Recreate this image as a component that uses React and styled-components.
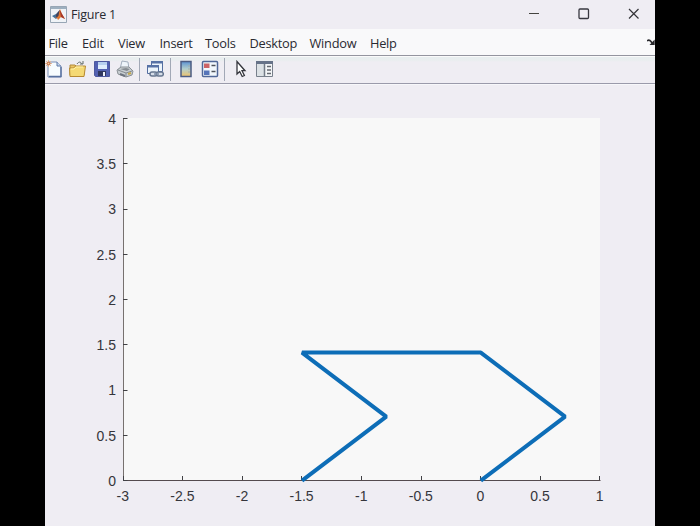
import React from "react";
import styled, { createGlobalStyle } from "styled-components";

const GlobalStyle = createGlobalStyle`
  * { box-sizing: border-box; }
  body { margin: 0; background: #000; overflow: hidden; }
`;

const Screen = styled.main`
  display: flex;
  justify-content: center;
  width: 700px;
  height: 526px;
  background: #000;
`;

const FigureWindow = styled.section`
  display: flex;
  flex-direction: column;
  width: 610px;
  height: 526px;
  overflow: hidden;
  background: #efedf3;
  color: #292a31;
  font-family: "Open Sans", "Noto Sans", sans-serif;
`;

const TitleBar = styled.header`
  display: flex;
  align-items: center;
  height: 29px;
  flex: none;
  padding: 0 12px 1px 5px;
  background: #efedf3;
`;

const Title = styled.h1`
  margin: 0 auto 0 4px;
  padding-top: 1px;
  font-size: 12.5px;
  letter-spacing: -0.2px;
  line-height: 18px;
  font-weight: 400;
`;

const WindowControls = styled.div`
  display: flex;
  gap: 32px;
`;

const ControlButton = styled.button`
  display: grid;
  place-items: center;
  width: 18px;
  height: 18px;
  padding: 0;
  border: 0;
  background: transparent;
`;

const MenuBar = styled.nav`
  display: flex;
  align-items: center;
  height: 27px;
  flex: none;
  padding: 2px 0 0 3.5px;
  background: #f9f9fa;
  border-bottom: 1px solid #94959f;
`;

const MenuItem = styled.span`
  width: ${({ $width }) => $width}px;
  font-size: 12.8px;
  line-height: 18px;
  letter-spacing: -0.25px;
  white-space: nowrap;
`;

const DockIcon = styled.svg`
  margin-left: auto;
  flex: none;
`;

const ToolBar = styled.div`
  display: flex;
  align-items: center;
  height: 28px;
  flex: none;
  padding-bottom: 1px;
  background: linear-gradient(#fafafa 1px, #e8eeef 1px, #e9eeef 4px, #efedf3 6px);
  border-bottom: 1px solid #9a9aaa;
`;

const Tool = styled.span`
  display: flex;
  width: 18px;
  height: 18px;
  flex: none;
  margin: 0 ${({ $after }) => $after || 0}px 0 ${({ $before }) => $before || 0}px;
`;

const Separator = styled.i`
  width: 1px;
  height: 23px;
  flex: none;
  background: #a2a8b6;
`;

const PlotPanel = styled.div`
  flex: 1;
  border-top: 1px solid #f7f7fa;
`;

const Chart = styled.svg`
  display: block;
  font-family: "Liberation Sans", Arial, sans-serif;
  font-size: 14px;
  fill: #35353b;
`;

const menus = [
  ["File", 33.5], ["Edit", 36], ["View", 41.5], ["Insert", 45.5],
  ["Tools", 44.5], ["Desktop", 60], ["Window", 60.5], ["Help", 40],
];

const Icon = ({ children, width = 18 }) => (
  <svg width={width} height="18" viewBox={`0 0 ${width} 18`} fill="none">{children}</svg>
);

const MatlabIcon = () => (
  <svg width="17" height="17" viewBox="0 0 17 17">
    <path d="M.5 .5h16v16H.5z" fill="#f0f3f7" stroke="#98a6b5" />
    <path d="M1 1h15v2H1z" fill="#9eafbf" />
    <path d="M2 10l4-2 4-4-1 6-3 3z" fill="#416f98" />
    <path d="M5 12l3-2 2-7 2 5 3 5-4-2-3 3-1-2z" fill="#e27832" />
    <path d="M9.5 3.5l2.5 4.5 3 5-4-2z" fill="#a5382c" />
    <path d="M6 9l3.5-5-1 5.500-2 2.500z" fill="#473f55" />
  </svg>
);

const NewIcon = () => (
  <Icon>
    <path d="M3 2h9l4 4v11H3z" fill="#f8fcff" stroke="#7b8eb6" />
    <path d="M12 2v4h4" fill="#c6d9ed" stroke="#6078a8" />
    <path d="M4 16.500h12V7" stroke="#59719f" strokeWidth="1.4" />
    <path d="M3.5 0v7M0 3.5h7M1 1l5 5M6 1L1 6" stroke="#e4bb9c" />
    <circle cx="3.5" cy="3.5" r="2" fill="#c97e56" />
    <circle cx="3.5" cy="3.5" r=".8" fill="#f4d0a2" />
  </Icon>
);

const FolderIcon = () => (
  <Icon>
    <path d="M2 15V5h5l2 2h7v8z" fill="#ebc565" stroke="#b18a3d" />
    <path d="M1.500 8h4l2-2h10l-1.500 10.500H2z" fill="#f5d974" stroke="#b78a32" />
    <path d="M9 4c2-3 4-2 5 0m-2 0h3V1" stroke="#626d68" />
    <path d="M3 9h3l2-2h7" stroke="#fff2a9" />
  </Icon>
);

const SaveIcon = () => (
  <Icon>
    <path d="M1.5 1.5h15v15h-14l-1-1z" fill="#5361b1" stroke="#4e599f" />
    <path d="M5 2h9v7H5z" fill="#e0eefc" />
    <path d="M5 2h9v3H5z" fill="#b8d1ef" />
    <path d="M5 11h8v5H5z" fill="#30375f" />
    <path d="M10 12h2v4h-2z" fill="#eef2fa" />
  </Icon>
);

const PrintIcon = () => (
  <Icon>
    <path d="M4 9L6 1l6 1 1 7z" fill="#eef4fa" stroke="#a2aebd" />
    <path d="M1 10l4-3h8l4 4-1 4-6 2-8-3z" fill="#c8ced2" stroke="#8b9196" />
    <path d="M2 10l8 3 6-2M10 13v4" stroke="#858b91" />
    <path d="M4 9l7 2 3-2-4-1z" fill="#858b91" />
    <path d="M4 14l5 2" stroke="#6e7580" strokeWidth="2" />
    <path d="M12 14l3-1" stroke="#c4a84b" strokeWidth="2" />
  </Icon>
);

const LinkIcon = () => (
  <Icon>
    <path d="M5.500 1.5h11v10h-11z" fill="#edf4fb" stroke="#526da0" />
    <path d="M5 1h12v2.500H5z" fill="#5872a6" />
    <path d="M1.5 5.5h11v8h-11z" fill="#edf4fb" stroke="#526da0" />
    <path d="M1 5h12v2.500H1z" fill="#5872a6" />
    <rect x="4" y="12" width="7" height="4" rx="2" fill="#d7dee9" stroke="#65758f" strokeWidth="1.5" />
    <rect x="10.300" y="12" width="7" height="4" rx="2" fill="#d7dee9" stroke="#65758f" strokeWidth="1.5" />
    <path d="M8 14h5" stroke="#7b8ca6" strokeWidth="1.5" />
  </Icon>
);

const ColorbarIcon = () => (
  <Icon>
    <defs>
      <linearGradient id="barColors" x1="0" x2="0" y1="0" y2="1">
        <stop stopColor="#5b92d1" /><stop offset=".5" stopColor="#b3cfcc" /><stop offset="1" stopColor="#efc36b" />
      </linearGradient>
    </defs>
    <path d="M4 1.5h10v15H4z" fill="url(#barColors)" stroke="#4c5c83" strokeWidth="1.5" />
    <path d="M11 6h2m-2 3h2m-2 3h2" stroke="#a4ada9" />
  </Icon>
);

const LegendIcon = () => (
  <Icon>
    <rect x="1.500" y="1.5" width="15" height="15" rx="1" fill="#f2f7fc" stroke="#506798" strokeWidth="1.5" />
    <path d="M3 3.500h5.500v4.500H3z" fill="#cc6266" />
    <path d="M3 10.500h5.500V15H3z" fill="#5674b9" />
    <path d="M10.5 5.5h4m-4 6h4" stroke="#4f535b" strokeWidth="1.5" />
  </Icon>
);

const CursorIcon = () => (
  <Icon>
    <path d="M5 1.5v12.500l2.700-2.500 2.500 5 2.200-1-2.400-4.800H13z" fill="#fff" stroke="#34353c" strokeWidth="1.3" />
  </Icon>
);

const InspectorIcon = () => (
  <Icon>
    <path d="M1.500 1.5h16v15h-16z" fill="#f4f6f8" stroke="#777f8b" />
    <path d="M1 1h17v3H1z" fill="#677389" />
    <path d="M2 4h7v12H2z" fill="#dce1e5" />
    <path d="M9.500 4v12" stroke="#737b87" strokeWidth="1.5" />
    <path d="M12 6.500h4m-4 3.500h4m-4 3.500h4" stroke="#656a70" strokeWidth="1.5" />
  </Icon>
);

const xPos = (value) => 78.5 + (value + 3) * 119.2;
const yPos = (value) => 396 - value * 90.6;
const xTicks = [-3, -2.5, -2, -1.5, -1, -0.5, 0, 0.5, 1];
const yTicks = [4, 3.5, 3, 2.5, 2, 1.5, 1, 0.5, 0];
const points = [[-1.5, 0], [-0.793, 0.707], [-1.5, 1.414], [0, 1.414], [0.707, 0.707], [0, 0]];

function FigurePlot() {
  return (
    <Chart width="610" height="441" viewBox="0 0 610 441">
      <path d="M78 33h477v363H78z" fill="#f8f8f8" />
      <path d="M78.5 33v362.5" fill="none" stroke="#77716f" />
      <path d="M78 395.5h477.5" fill="none" stroke="#544b4e" />
      {xTicks.map((value) => (
        <g key={value}>
          <path d={`M${Math.floor(xPos(value) - 0.4) + 0.5} 395v-4`} stroke="#414145" />
          <text x={xPos(value) - 0.7} y="416" textAnchor="middle">{value}</text>
        </g>
      ))}
      {yTicks.map((value) => (
        <g key={value}>
          <path d={`M78 ${Math.floor(yPos(value) - 0.2) + 0.5}h4.5`} stroke="#414145" />
          <text x="71" y={yPos(value) + 5} textAnchor="end">{value}</text>
        </g>
      ))}
      <polyline
        points={points.map(([x, y]) => `${xPos(x) - 0.3},${yPos(y) - 0.3}`).join(" ")}
        fill="none" stroke="#0d6db7" strokeWidth="4" strokeLinejoin="bevel" strokeLinecap="butt"
      />
    </Chart>
  );
}

export default function App() {
  return (
    <Screen>
      <GlobalStyle />
      <FigureWindow>
        <TitleBar>
          <MatlabIcon />
          <Title>Figure 1</Title>
          <WindowControls>
            <ControlButton aria-label="Minimize"><Icon><path d="M4 8.5h10" stroke="#44443f" /></Icon></ControlButton>
            <ControlButton aria-label="Maximize"><Icon><rect x="4" y="4" width="9.5" height="9.5" rx="1" stroke="#383840" strokeWidth="1.3" /></Icon></ControlButton>
            <ControlButton aria-label="Close"><Icon><path d="M4 4l9.500 9.500M13.500 4L4 13.500" stroke="#343438" strokeWidth="1.2" /></Icon></ControlButton>
          </WindowControls>
        </TitleBar>
        <MenuBar>
          {menus.map(([label, width]) => <MenuItem key={label} $width={width}>{label}</MenuItem>)}
          <DockIcon width="8" height="10" viewBox="0 0 8 10">
            <path d="M0 3c2-2 4 0 5 2" fill="none" stroke="#28282c" strokeWidth="1.7" />
            <path d="M7.700 1.500v5.500H2.500z" fill="#28282c" />
          </DockIcon>
        </MenuBar>
        <ToolBar>
          <Tool><NewIcon /></Tool>
          <Tool $before={5}><FolderIcon /></Tool>
          <Tool $before={7}><SaveIcon /></Tool>
          <Tool $before={5} $after={5}><PrintIcon /></Tool>
          <Separator />
          <Tool $before={6} $after={6}><LinkIcon /></Tool>
          <Separator />
          <Tool $before={6}><ColorbarIcon /></Tool>
          <Tool $before={6} $after={5}><LegendIcon /></Tool>
          <Separator />
          <Tool $before={7}><CursorIcon /></Tool>
          <Tool $before={5}><InspectorIcon /></Tool>
        </ToolBar>
        <PlotPanel><FigurePlot /></PlotPanel>
      </FigureWindow>
    </Screen>
  );
}
